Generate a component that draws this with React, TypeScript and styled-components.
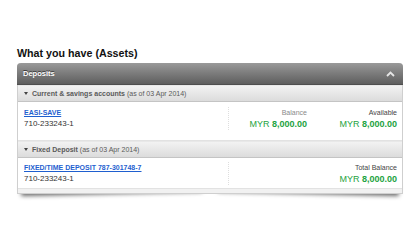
import React from "react";
import styled, { createGlobalStyle } from "styled-components";

const Global = createGlobalStyle`
  html, body { margin: 0; padding: 0; background: #ffffff; }
  body { font-family: "Liberation Sans", Arial, sans-serif; }
`;

const Page = styled.div`
  padding: 47px 12px 20px 17px;
`;

const Title = styled.h2`
  margin: 0 0 3px 0;
  font-size: 10.7px;
  line-height: 13px;
  font-weight: bold;
  color: #111;
`;

const Panel = styled.div`
  position: relative;
  z-index: 0;
  width: 386px;
  border-radius: 4px 4px 0 0;
  &::before,
  &::after {
    content: "";
    position: absolute;
    z-index: -1;
    bottom: 7px;
    width: 47%;
    height: 12px;
    background: #777;
    box-shadow: 0 7px 4px rgba(0, 0, 0, 0.6);
  }
  &::before {
    left: 4px;
    transform: rotate(-1.3deg);
  }
  &::after {
    right: 4px;
    transform: rotate(1.3deg);
  }
`;

const Inner = styled.div`
  position: relative;
  background: #fff;
  border: 1px solid #cfcfcf;
  border-top: none;
  border-radius: 4px 4px 0 0;
`;

const Header = styled.div`
  display: flex;
  align-items: center;
  justify-content: space-between;
  height: 21px;
  padding: 0 8px 0 6px;
  margin: 0 -1px;
  border-radius: 4px 4px 0 0;
  background: linear-gradient(#9a9a9a, #7e7e7e 45%, #5e5e5e);
  border-bottom: 1px solid #4e4e4e;
  color: #fff;
  font-size: 7.5px;
  font-weight: bold;
  text-shadow: 0 -1px 0 #3a3a3a;
`;

const Chevron = styled.svg`
  display: block;
`;

const SubHeader = styled.div`
  display: flex;
  align-items: center;
  gap: 3px;
  height: 15px;
  padding: 0 6px;
  background: linear-gradient(#f2f2f2, #dcdcdc);
  border-bottom: 1px solid #c4c4c4;
  border-top: 1px solid #e8e8e8;
  color: #5a5a5a;
  font-size: 7px;
`;

const Strong = styled.span`
  font-weight: bold;
`;

const Tri = styled.span`
  display: inline-block;
  width: 0;
  height: 0;
  border-left: 2px solid transparent;
  border-right: 2px solid transparent;
  border-top: 3px solid #444;
  margin-right: 1px;
`;

const Row = styled.div<{ $top: number; $bottom: number }>`
  display: grid;
  grid-template-columns: 1fr 84px 90px;
  padding: ${(p) => p.$top}px 0 ${(p) => p.$bottom}px 6px;
  border-bottom: 1px solid #e2e2e2;
`;

const Left = styled.div`
  display: flex;
  flex-direction: column;
`;

const Col = styled.div<{ $divider?: boolean }>`
  display: flex;
  flex-direction: column;
  align-items: flex-end;
  padding-right: 5px;
  border-left: ${(p) => (p.$divider ? "1px dotted #dedede" : "none")};
`;

const Link = styled.a`
  font-size: 7px;
  line-height: 11px;
  font-weight: bold;
  color: #1f5fcf;
  text-decoration: underline;
  cursor: pointer;
`;

const AccNo = styled.div`
  font-size: 8px;
  line-height: 12px;
  color: #333;
`;

const Label = styled.div<{ $dark?: boolean }>`
  font-size: 7px;
  line-height: 11px;
  color: ${(p) => (p.$dark ? "#444" : "#8a8a8a")};
`;

const Amount = styled.div`
  font-size: 9px;
  line-height: 12px;
  color: #1ea341;
  white-space: nowrap;
  b {
    font-weight: bold;
  }
`;

const Footer = styled.div`
  height: 4px;
  background: #f1f1f1;
`;

const Money = ({ v }: { v: string }) => (
  <Amount>
    MYR <b>{v}</b>
  </Amount>
);

export default function App() {
  return (
    <>
      <Global />
      <Page>
        <Title>What you have (Assets)</Title>
        <Panel>
          <Inner>
            <Header>
              <span>Deposits</span>
              <Chevron width="9" height="6" viewBox="0 0 9 6">
                <polyline
                  points="1,5 4.5,1.5 8,5"
                  fill="none"
                  stroke="#e6e6e6"
                  strokeWidth="1.8"
                />
              </Chevron>
            </Header>
            <SubHeader>
              <Tri />
              <span>
                <Strong>Current &amp; savings accounts</Strong> (as of 03 Apr 2014)
              </span>
            </SubHeader>
            <Row $top={5} $bottom={10}>
              <Left>
                <Link>EASI-SAVE</Link>
                <AccNo>710-233243-1</AccNo>
              </Left>
              <Col $divider>
                <Label>Balance</Label>
                <Money v="8,000.00" />
              </Col>
              <Col>
                <Label $dark>Available</Label>
                <Money v="8,000.00" />
              </Col>
            </Row>
            <SubHeader>
              <Tri />
              <span>
                <Strong>Fixed Deposit</Strong> (as of 03 Apr 2014)
              </span>
            </SubHeader>
            <Row $top={4} $bottom={3}>
              <Left>
                <Link>FIXED/TIME DEPOSIT 787-301748-7</Link>
                <AccNo>710-233243-1</AccNo>
              </Left>
              <Col $divider />
              <Col>
                <Label $dark>Total Balance</Label>
                <Money v="8,000.00" />
              </Col>
            </Row>
            <Footer />
          </Inner>
        </Panel>
      </Page>
    </>
  );
}
